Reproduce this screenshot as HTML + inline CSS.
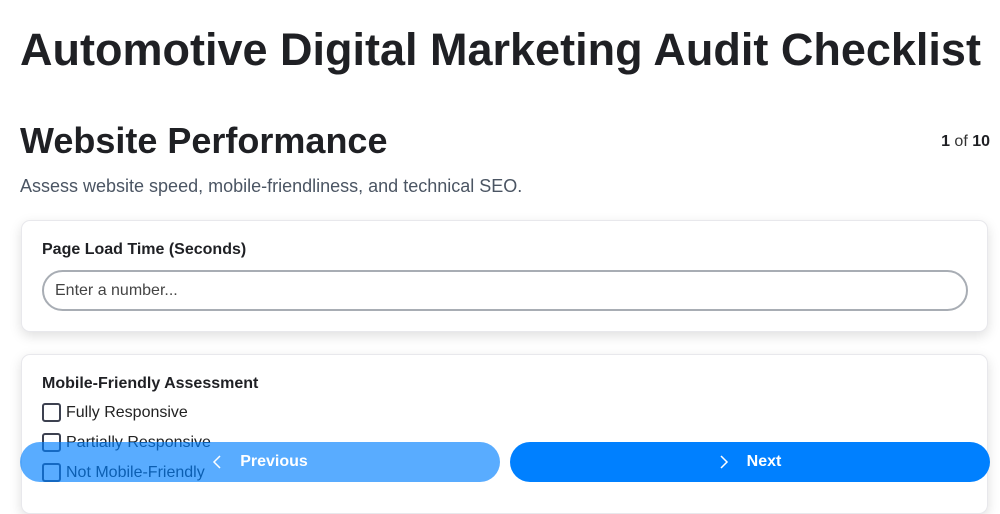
<!DOCTYPE html>
<html><head><style>
*{box-sizing:border-box;margin:0;padding:0}
body{width:1000px;height:500px;overflow:hidden;background:#fff;font-family:"Liberation Sans",sans-serif;color:#1f2024;position:relative}
h1{position:absolute;left:20px;top:24px;font-size:45px;font-weight:700}
h2{position:absolute;left:20px;top:120px;font-size:36px;font-weight:700}
.cnt{position:absolute;right:10px;top:133px;font-size:16px;color:#333}
.cnt b{color:#1f2024}
.sub{position:absolute;left:20px;top:176px;font-size:18px;color:#4b5563}
.card{position:absolute;left:21px;width:967px;background:#fff;border:1px solid #e8e8ec;border-radius:9px;box-shadow:0 4px 12px rgba(0,0,0,.13)}
.lbl{position:absolute;left:20px;font-size:16px;font-weight:700;color:#1f2024}
.inp{position:absolute;left:20px;top:49px;width:926px;height:41px;border:2px solid #a8adb4;border-radius:21px;font-size:16px;color:#444;padding:10px 11px}
.opt{position:absolute;left:20px;font-size:16px;color:#222;display:flex;align-items:center}
.opt i{display:inline-block;width:19px;height:19px;border:2px solid #3d4150;border-radius:3px;margin-right:5px}
.btn{position:absolute;top:442px;height:40px;border-radius:20px;color:#fff;font-weight:700;font-size:16px;display:flex;align-items:center;justify-content:center;gap:18px}
</style></head><body>
<h1>Automotive Digital Marketing Audit Checklist</h1>
<h2>Website Performance</h2>
<div class="cnt"><b>1</b> of <b>10</b></div>
<div class="sub">Assess website speed, mobile-friendliness, and technical SEO.</div>
<div class="card" style="top:220px;height:112px">
<div class="lbl" style="top:20px">Page Load Time (Seconds)</div>
<div class="inp">Enter a number...</div>
</div>
<div class="card" style="top:354px;height:160px">
<div class="lbl" style="top:20px">Mobile-Friendly Assessment</div>
<div class="opt" style="top:48px"><i></i>Fully Responsive</div>
<div class="opt" style="top:78px"><i></i>Partially Responsive</div>
<div class="opt" style="top:108px"><i></i>Not Mobile-Friendly</div>
</div>
<div class="btn" style="left:20px;width:480px;background:rgba(0,128,255,.65)"><svg width="10" height="16" viewBox="0 0 10 16"><path d="M8 2 2 8l6 6" fill="none" stroke="#fff" stroke-width="1.5"/></svg>Previous</div>
<div class="btn" style="left:510px;width:480px;background:#0080ff"><svg width="10" height="16" viewBox="0 0 10 16"><path d="M2 2l6 6-6 6" fill="none" stroke="#fff" stroke-width="1.5"/></svg>Next</div>
</body></html>
